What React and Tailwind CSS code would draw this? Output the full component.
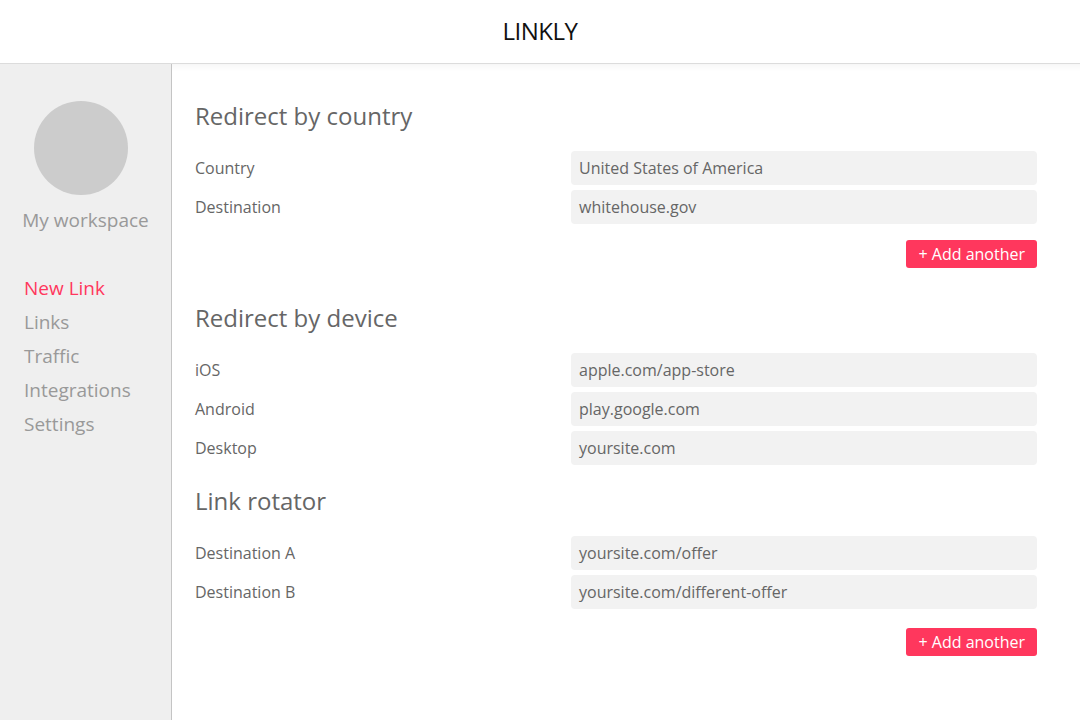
const nav = ["New Link", "Links", "Traffic", "Integrations", "Settings"];

const sections = [
  {
    title: "Redirect by country",
    rows: [
      ["Country", "United States of America"],
      ["Destination", "whitehouse.gov"],
    ],
    button: "mt-4",
  },
  {
    title: "Redirect by device",
    rows: [
      ["iOS", "apple.com/app-store"],
      ["Android", "play.google.com"],
      ["Desktop", "yoursite.com"],
    ],
    button: null,
  },
  {
    title: "Link rotator",
    rows: [
      ["Destination A", "yoursite.com/offer"],
      ["Destination B", "yoursite.com/different-offer"],
    ],
    button: "mt-[19px]",
  },
];

function Section({ title, rows, button, className }) {
  return (
    <section className={className}>
      <h2 className="h-8 text-[24px] leading-8 text-[#666]">{title}</h2>
      <div className="mt-[19px] flex flex-col gap-[5px]">
        {rows.map(([label, value]) => (
          <div key={label} className="grid grid-cols-[376px_1fr] items-center">
            <span className="text-[16px] text-[#666]">{label}</span>
            <div className="flex h-[34px] items-center rounded-[4px] bg-[#f2f2f2] pl-2 text-[16px] text-[#666]">
              {value}
            </div>
          </div>
        ))}
      </div>
      {button ? (
        <div className={button + " flex justify-end"}>
          <button className="h-[28px] rounded-[3px] bg-[#ff375d] px-3 text-[16px] leading-[28px] text-white">
            + Add another
          </button>
        </div>
      ) : null}
    </section>
  );
}

export default function App() {
  return (
    <div className="flex h-[720px] w-[1080px] flex-col overflow-hidden bg-white font-['Open_Sans',sans-serif]">
      {/* Header */}
      <header className="flex h-[64px] shrink-0 items-center justify-center border-b border-[#dcdcdc] pb-[2px]">
        <h1 className="text-[24px] tracking-[-0.5px] text-[#111]">LINKLY</h1>
      </header>

      <div className="flex flex-1">
        {/* Sidebar */}
        <aside className="flex w-[172px] shrink-0 flex-col border-r border-[#c4c4c4] bg-[#efefef] pt-[37px]">
          <div className="flex flex-col items-center">
            <div className="mr-[10px] h-[94px] w-[94px] rounded-full bg-[#cccccc]" />
            <p className="mt-[12px] text-[19px] leading-[26px] text-[#999]">My workspace</p>
          </div>
          <nav className="mt-[38px] flex flex-col pl-6">
            {nav.map((item, i) => (
              <a
                key={item}
                className={
                  "text-[19px] leading-[34px] " +
                  (i === 0 ? "text-[#ff375d]" : "text-[#999]")
                }
              >
                {item}
              </a>
            ))}
          </nav>
        </aside>

        {/* Main */}
        <main className="flex-1 pl-[23px] pr-[43px] pt-[36px] shadow-[inset_0_10px_10px_-10px_rgba(0,0,0,0.07)]">
          <Section {...sections[0]} />
          <Section {...sections[1]} className="mt-[34px]" />
          <Section {...sections[2]} className="mt-[20px]" />
        </main>
      </div>
    </div>
  );
}
